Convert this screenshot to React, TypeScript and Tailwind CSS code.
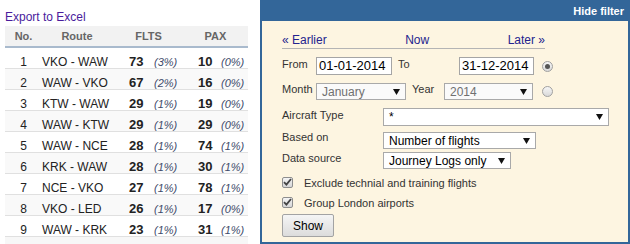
import React from 'react';

const rows = [
  { no: 1, route: 'VKO - WAW', f: 73, fp: '3%', p: 10, pp: '0%' },
  { no: 2, route: 'WAW - VKO', f: 67, fp: '2%', p: 16, pp: '0%' },
  { no: 3, route: 'KTW - WAW', f: 29, fp: '1%', p: 19, pp: '0%' },
  { no: 4, route: 'WAW - KTW', f: 29, fp: '1%', p: 29, pp: '0%' },
  { no: 5, route: 'WAW - NCE', f: 28, fp: '1%', p: 74, pp: '1%' },
  { no: 6, route: 'KRK - WAW', f: 28, fp: '1%', p: 30, pp: '1%' },
  { no: 7, route: 'NCE - VKO', f: 27, fp: '1%', p: 78, pp: '1%' },
  { no: 8, route: 'VKO - LED', f: 26, fp: '1%', p: 17, pp: '0%' },
  { no: 9, route: 'WAW - KRK', f: 23, fp: '1%', p: 31, pp: '1%' },
];

function Arrow() {
  return (
    <svg width="7" height="6" viewBox="0 0 7 6" className="shrink-0">
      <polygon points="0,0 7,0 3.5,6" fill="#111" />
    </svg>
  );
}

function Select({ value, className, muted }: { value: string; className: string; muted?: boolean }) {
  return (
    <div className={`flex items-center justify-between border border-[#a9a9a9] pl-[5px] pr-[5px] text-[12px] ${muted ? 'bg-[#fafafa] text-[#707070]' : 'bg-white text-black'} ${className}`}>
      <span>{value}</span>
      <Arrow />
    </div>
  );
}

function Radio({ checked }: { checked?: boolean }) {
  return (
    <span className="flex h-[11px] w-[11px] items-center justify-center rounded-full border border-[#a0a0a0] bg-linear-to-b from-[#f6f6f6] to-[#d9d9d9]">
      {checked && <span className="h-[5px] w-[5px] rounded-full bg-[#555]" />}
    </span>
  );
}

function Check() {
  return (
    <span className="flex h-[11px] w-[11px] items-center justify-center rounded-[2px] border border-[#8e8e8e] bg-linear-to-b from-[#f4f4f4] to-[#d6d6d6]">
      <svg width="9" height="8" viewBox="0 0 9 8">
        <path d="M1 4.2 L3.4 6.6 L8 1" fill="none" stroke="#444" strokeWidth="1.8" />
      </svg>
    </span>
  );
}

export default function App() {
  return (
    <div className="flex h-[244px] w-[630px] bg-white font-['Liberation_Sans',Arial,sans-serif] text-[#222]">
      {/* Routes table */}
      <div className="ml-[5px] w-[243px]">
        <div className="h-[26px] pt-[10px] text-[12px] leading-[15px] text-[#4a1c9c]">Export to Excel</div>
        <div className="flex h-[22px] items-center border-b-2 border-[#a9bacd] bg-[#f2f2f2] text-[11px] font-bold text-[#666]">
          <span className="w-[37px] text-center">No.</span>
          <span className="w-[70px] text-center">Route</span>
          <span className="w-[73px] text-center">FLTS</span>
          <span className="w-[61px] text-center">PAX</span>
        </div>
        {rows.map((r) => (
          <div key={r.no} className={`flex h-[21px] items-baseline border-b border-[#e0e0e0] pt-[4px] ${r.no % 2 === 0 ? 'bg-[#f9f9f9]' : ''}`}>
            <span className="w-[37px] text-center text-[12px]">{r.no}</span>
            <span className="w-[80px] text-[12px]">{r.route}</span>
            <span className="flex w-[68px] items-baseline pl-[7px]">
              <span className="w-[25px] text-[13px] font-bold">{r.f}</span>
              <span className="text-[11px] italic text-[#3d4a6a]">({r.fp})</span>
            </span>
            <span className="flex items-baseline pl-[8px]">
              <span className="w-[23px] text-[13px] font-bold">{r.p}</span>
              <span className="text-[11px] italic text-[#3d4a6a]">({r.pp})</span>
            </span>
          </div>
        ))}
        <div className="h-[7px] bg-[#f7f7f7]" />
      </div>

      {/* Filter panel */}
      <div className="ml-[12px] flex h-full flex-1 flex-col border-2 border-[#336699] bg-[#fdf5e1]">
        <div className="h-[19px] bg-[#336699] pr-[4px] text-right text-[11px] font-bold leading-[19px] text-white">Hide filter</div>
        <div className="pl-[20px] pt-[10px] text-[11px] text-[#333]">
          <div className="flex h-[18px] w-[263px] items-center justify-between border-b border-[#b4b4b4] text-[12px] text-[#23238e]">
            <span>« Earlier</span>
            <span>Now</span>
            <span>Later »</span>
          </div>

          <div className="mt-[8px] flex h-[18px] items-start">
            <span className="w-[34px] leading-[14px]">From</span>
            <div className="h-[18px] w-[76px] border border-[#a5a5a5] bg-white pl-[2px] text-[13px] leading-[16px] text-black">01-01-2014</div>
            <span className="ml-[6px] w-[61px] leading-[14px]">To</span>
            <div className="h-[18px] w-[75px] border border-[#a5a5a5] bg-white pl-[2px] text-[13px] leading-[16px] text-black">31-12-2014</div>
            <span className="ml-[8px] self-center"><Radio checked /></span>
          </div>

          <div className="mt-[8px] flex h-[17px] items-start">
            <span className="w-[34px] leading-[12px]">Month</span>
            <Select value="January" muted className="h-[17px] w-[90px]" />
            <span className="ml-[6px] w-[32px] leading-[12px]">Year</span>
            <Select value="2014" muted className="h-[17px] w-[89px]" />
            <span className="ml-[9px] self-center"><Radio /></span>
          </div>

          <div className="mt-[8px] flex h-[18px] items-start">
            <span className="w-[101px] leading-[14px]">Aircraft Type</span>
            <Select value="*" className="h-[18px] w-[226px]" />
          </div>

          <div className="mt-[6px] flex h-[16px] items-start">
            <span className="w-[101px] leading-[11px]">Based on</span>
            <Select value="Number of flights" className="h-[17px] w-[153px]" />
          </div>

          <div className="mt-[4px] flex h-[17px] items-start">
            <span className="w-[101px] leading-[12px]">Data source</span>
            <Select value="Journey Logs only" className="h-[17px] w-[128px]" />
          </div>

          <div className="mt-[7px] flex h-[12px] items-center">
            <Check />
            <span className="ml-[11px] pt-[2px]">Exclude technial and training flights</span>
          </div>

          <div className="mt-[8px] flex h-[12px] items-center">
            <Check />
            <span className="ml-[11px] pt-[2px]">Group London airports</span>
          </div>

          <button className="mt-[6px] h-[23px] w-[52px] rounded-[2px] border border-[#a3a3a3] bg-linear-to-b from-[#f5f5f5] to-[#dcdcdc] text-[12px] text-black">Show</button>
        </div>
      </div>
    </div>
  );
}
